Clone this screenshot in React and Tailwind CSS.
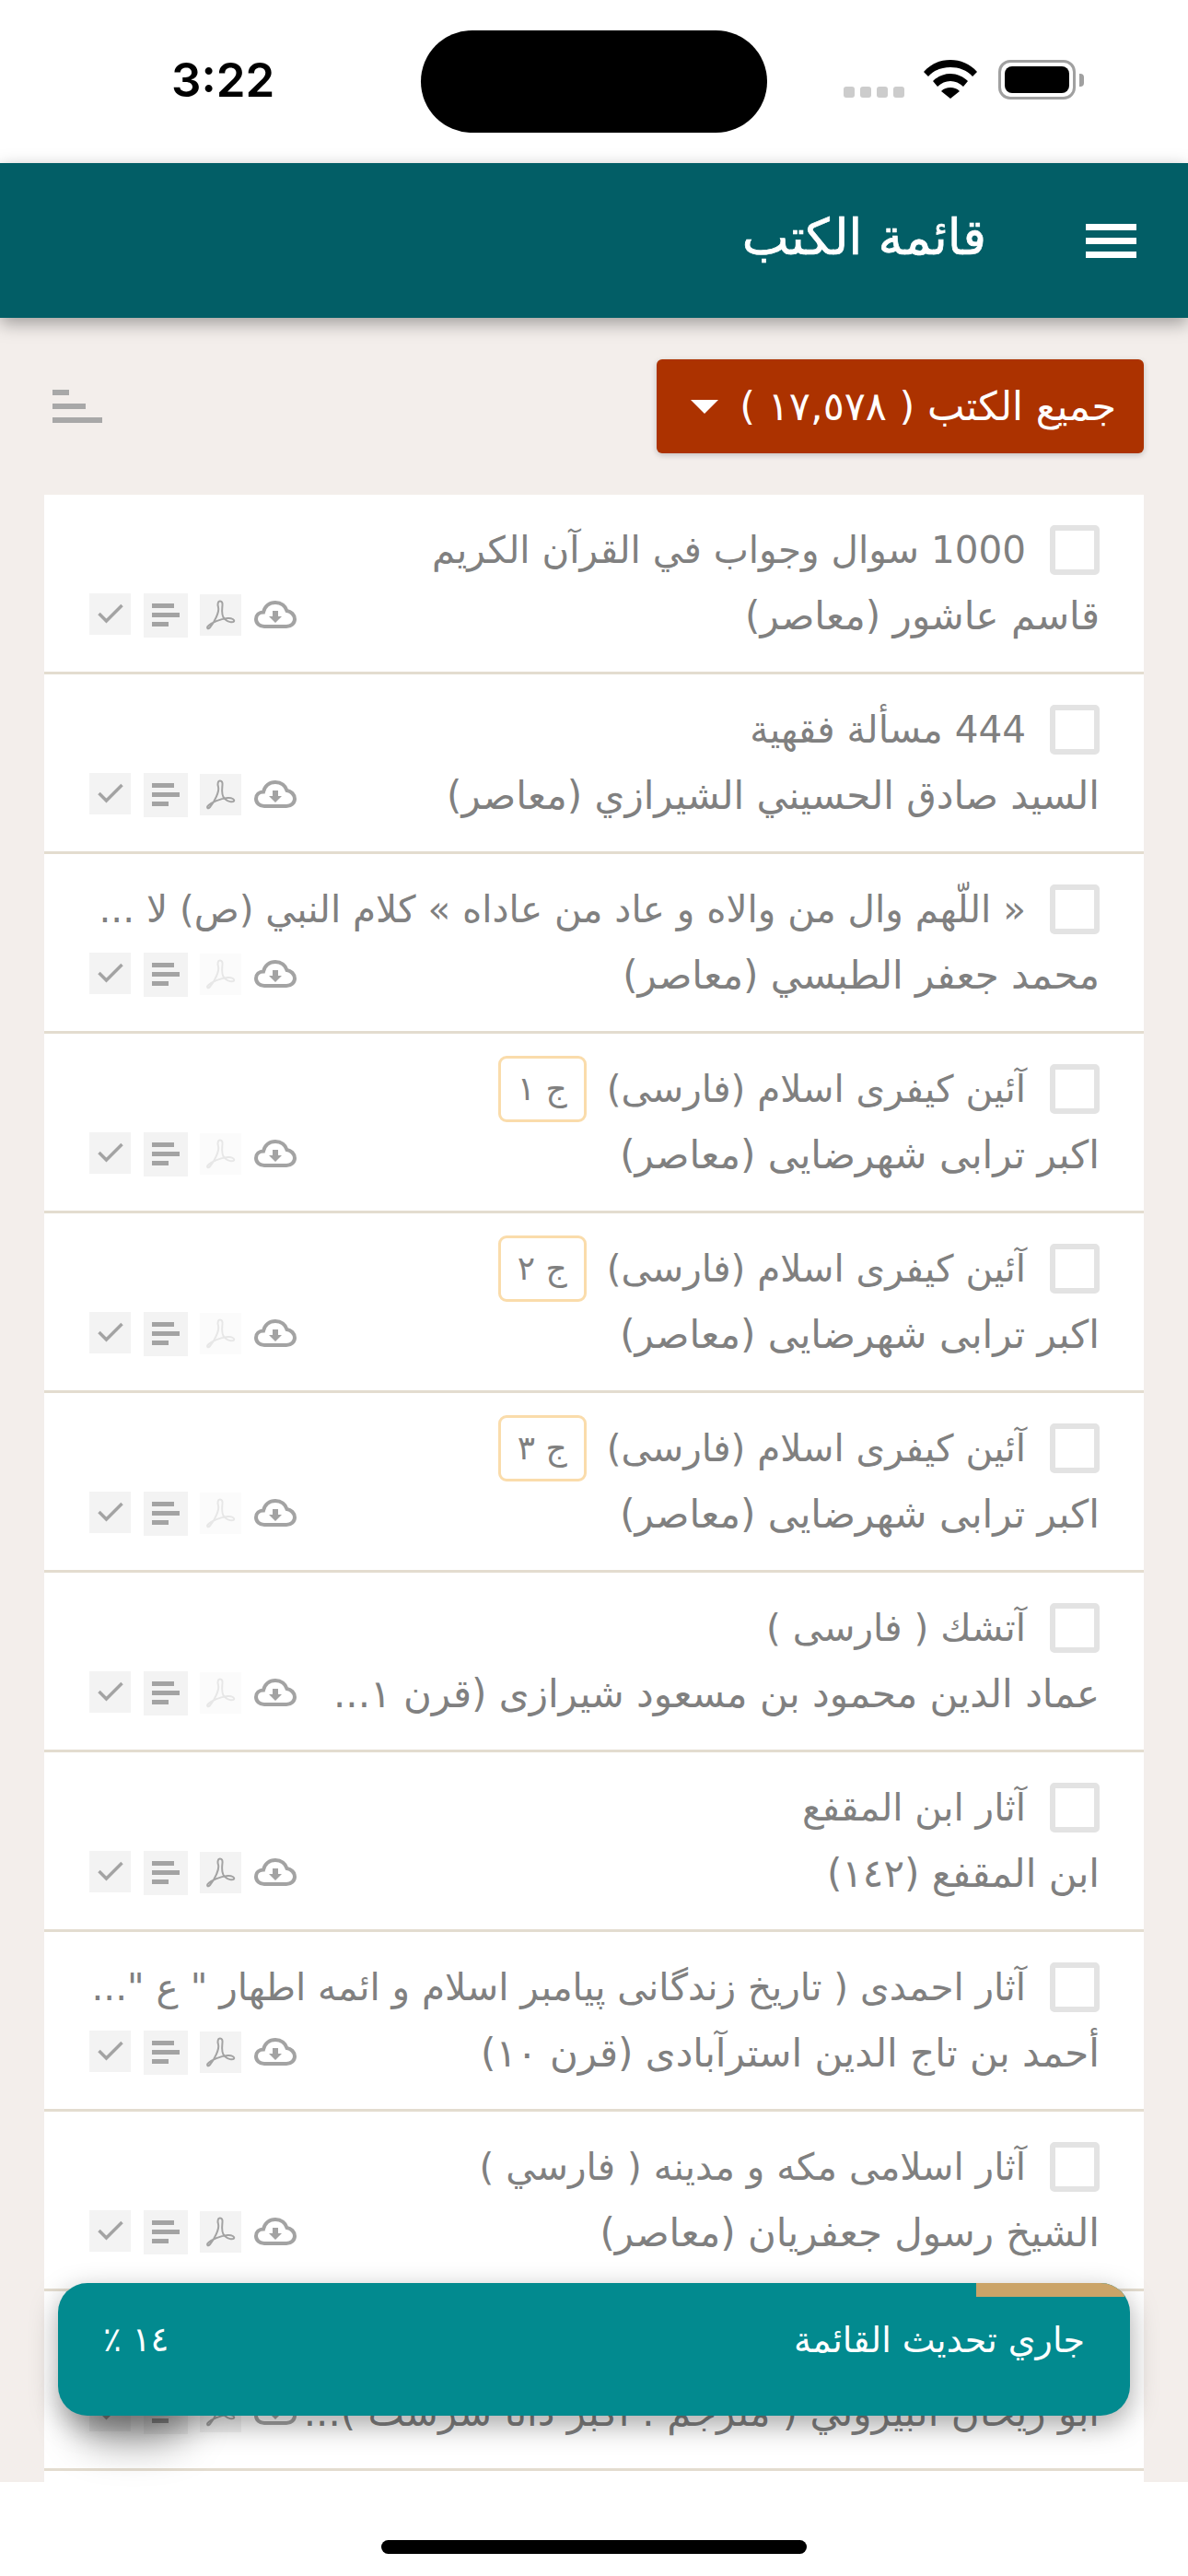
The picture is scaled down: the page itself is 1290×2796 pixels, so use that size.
const FONT = "font-['DejaVu_Sans',sans-serif]";

const rows = [
  { title: '1000 سوال وجواب في القرآن الكريم', author: 'قاسم عاشور (معاصر)', pdf: true },
  { title: '444 مسألة فقهية', author: 'السيد صادق الحسيني الشيرازي (معاصر)', pdf: true },
  { title: '« اللّهم وال من والاه و عاد من عاداه » كلام النبي (ص) لا ...', author: 'محمد جعفر الطبسي (معاصر)', pdf: false },
  { title: 'آئين كيفرى اسلام (فارسى)', chip: 'ج ١', author: 'اكبر ترابى شهرضايى (معاصر)', pdf: false },
  { title: 'آئين كيفرى اسلام (فارسى)', chip: 'ج ٢', author: 'اكبر ترابى شهرضايى (معاصر)', pdf: false },
  { title: 'آئين كيفرى اسلام (فارسى)', chip: 'ج ٣', author: 'اكبر ترابى شهرضايى (معاصر)', pdf: false },
  { title: 'آتشك ( فارسى )', author: 'عماد الدين محمود بن مسعود شيرازى (قرن ١...', pdf: false },
  { title: 'آثار ابن المقفع', author: 'ابن المقفع (١٤٢)', pdf: true },
  { title: 'آثار احمدى ( تاريخ زندگانى پيامبر اسلام و ائمه اطهار " ع "...', author: 'أحمد بن تاج الدين استرآبادى (قرن ١٠)', pdf: true },
  { title: 'آثار اسلامى مكه و مدينه ( فارسي )', author: 'الشيخ رسول جعفريان (معاصر)', pdf: true },
  // title of this one sits behind the toast
  { title: '', author: 'ابو ريحان البيروني ( مترجم : اكبر دانا سرشت )...', pdf: true },
  { title: '', author: '', pdf: true, empty: true },
];

function Tile({ className = '', children }) {
  return (
    <div className={`bg-[#f3f3f3] flex items-center justify-center ${className}`}>
      {children}
    </div>
  );
}

function Row({ row }) {
  if (row.empty) return <div className="h-[195px]" />;
  return (
    <div className="h-[195px] border-b-[3px] border-[#e3dccf] pt-[33px] pl-[49px] pr-[48px] text-[#808080]">
      <div className="flex items-center gap-[26px] h-[54px]">
        <div className="w-[54px] h-[54px] shrink-0 rounded-[5px] border-[6px] border-[#e3e3e3]" />
        <div className="min-w-0 text-[40.5px] leading-[54px] whitespace-nowrap">{row.title}</div>
        {row.chip && (
          <div className="w-[96px] h-[72px] shrink-0 -mr-[4px] rounded-[9px] border-[3px] border-[#fadcab] flex items-center justify-center text-[36px]">
            {row.chip}
          </div>
        )}
      </div>
      <div className="flex items-center justify-between mt-[18px] h-[54px]">
        <div className="text-[42px] leading-[54px] whitespace-nowrap">{row.author}</div>
        <div dir="ltr" className="flex items-start gap-[14px] shrink-0 -mt-[3px]">
          <Tile className="w-[45px] h-[45px]">
            <svg width="28" height="22" viewBox="0 0 28 22" fill="none" stroke="#a3a3a3" strokeWidth="3.500"><path d="M1.500 11l8 8L26.500 2" /></svg>
          </Tile>
          <Tile className="w-[48px] h-[48px] pl-[9px] !justify-start">
            <div className="flex flex-col gap-[5px] w-[30px]">
              <div className="h-[5px] w-[24px] bg-[#a3a3a3]" />
              <div className="h-[5px] w-[30px] bg-[#a3a3a3]" />
              <div className="h-[5px] w-[18px] bg-[#a3a3a3]" />
            </div>
          </Tile>
          <Tile className={`w-[45px] h-[45px] mt-[1px] -ml-[1px] ${row.pdf ? '' : 'opacity-25'}`}>
            <svg width="45" height="45" viewBox="0 0 45 45" fill="none" stroke="#a3a3a3" strokeWidth="2">
              <path d="M22 7.500C19.500 7.500 19 11 20 14C21.500 19 16 30 11 36C8.500 39 7 36 9.500 34C13 30.500 22 27 30 26C35 25.500 38 28 37 29.500C35.500 31 31 30.500 27 27C23 23.500 24 17 24.500 12C24.800 9.500 24 7.500 22 7.500Z" />
            </svg>
          </Tile>
          <svg className="mt-[8px]" width="46" height="30" viewBox="0 0 46 30" fill="none">
            <path d="M11 28C6 28 2 24.500 2 20S5.500 12.500 10 12.500C11.500 6 16.500 2 23 2S34 6 35.500 11C40 11.500 44 15.500 44 20S40 28 35 28Z" stroke="#a3a3a3" strokeWidth="4" />
            <path d="M20 11h6v6h4l-7 7-7-7h4z" fill="#a3a3a3" />
          </svg>
        </div>
      </div>
    </div>
  );
}

export default function App() {
  return (
    <div dir="rtl" className={`relative w-[1290px] h-[2796px] overflow-hidden bg-white ${FONT}`}>
      {/* status bar */}
      <div dir="ltr" className="h-[177px] flex items-start relative">
        <div className="ml-[186px] mt-[55px] text-black text-[51px] leading-[64px] font-semibold font-['Inter',sans-serif]">3:22</div>
        <div className="absolute left-[457px] top-[33px] w-[376px] h-[111px] rounded-[56px] bg-black" />
        <div className="absolute left-[916px] top-[94px] flex gap-[6px]">
          <div className="w-[12px] h-[12px] rounded-[3px] bg-[#cccccc]" />
          <div className="w-[12px] h-[12px] rounded-[3px] bg-[#cccccc]" />
          <div className="w-[12px] h-[12px] rounded-[3px] bg-[#cccccc]" />
          <div className="w-[12px] h-[12px] rounded-[3px] bg-[#cccccc]" />
        </div>
        <svg className="absolute left-[1003px] top-[65px]" width="58" height="42" viewBox="0 0 58 42">
          <path d="M29 0C18 0 8 4 0 13l5 5c6-7 15-10 24-10s18 3 24 10l5-5C50 4 40 0 29 0z" />
          <path d="M29 15c-7 0-14 3-19 8l5 6c4-4 9-6 14-6s10 2 14 6l5-6c-5-5-12-8-19-8z" />
          <path d="M29 30c-4 0-7 1-10 4l10 8 10-8c-3-3-6-4-10-4z" />
        </svg>
        <div className="absolute left-[1084px] top-[65px] w-[84px] h-[43px] rounded-[13px] border-[3px] border-[#a0a0a0] p-[4px]">
          <div className="w-full h-full rounded-[8px] bg-black" />
        </div>
        <div className="absolute left-[1172px] top-[80px] w-[5px] h-[14px] rounded-r-[4px] bg-[#a0a0a0]" />
      </div>

      {/* header */}
      <div className="relative z-10 h-[168px] bg-[#025e66] shadow-[0_6px_18px_rgba(0,0,0,0.35)] flex items-center pr-[56px] text-white">
        <div className="flex flex-col gap-[8px] w-[55px]">
          <div className="h-[7px] bg-white" />
          <div className="h-[7px] bg-white" />
          <div className="h-[7px] bg-white" />
        </div>
        <div className="mr-[108px] text-[54px] leading-[60px] -mt-[6px] [-webkit-text-stroke:0.7px_white]">قائمة الكتب</div>
      </div>

      {/* filter row and list */}
      <div className="bg-[#f3eeeb] h-[2349px] px-[48px] overflow-hidden">
        <div className="flex items-center justify-between h-[192px] pt-[45px] pb-[45px]">
          <div className="w-[529px] h-[102px] rounded-[6px] bg-[#ac3200] shadow-[0_2px_6px_rgba(0,0,0,0.2)] flex items-center justify-between pr-[30px] pl-[37px] text-white text-[43px] whitespace-nowrap">
            <span>جميع الكتب ( ١٧,٥٧٨ )</span>
            <span className="w-0 h-0 border-x-[15px] border-x-transparent border-t-[15px] border-t-white" />
          </div>
          <div dir="ltr" className="flex flex-col gap-[9px] items-start ml-[9px]">
            <div className="h-[6px] w-[18px] bg-[#a8a8a8]" />
            <div className="h-[6px] w-[36px] bg-[#a8a8a8]" />
            <div className="h-[6px] w-[54px] bg-[#a8a8a8]" />
          </div>
        </div>

        <div className="bg-white">
          {rows.map((r, i) => <Row key={i} row={r} />)}
        </div>
      </div>

      {/* shadow blob under the toast */}
      <div className="absolute left-[85px] top-[2585px] w-[120px] h-[65px] rounded-full bg-black/40 blur-[22px]" />

      {/* progress toast */}
      <div className="absolute left-[63px] top-[2478px] w-[1164px] h-[144px] rounded-[32px] bg-[#028a8f] shadow-[0_10px_30px_rgba(0,0,0,0.35)] overflow-hidden text-white">
        <div className="absolute right-[6px] top-0 w-[161px] h-[15px] bg-[#cba468] rounded-tr-[16px]" />
        <div className="flex items-center justify-between pt-[38px] px-[49px] text-[38px] leading-[48px]">
          <span>جاري تحديث القائمة</span>
          <span className="text-[37px]">١٤ ٪</span>
        </div>
      </div>

      {/* home indicator */}
      <div className="absolute left-[414px] top-[2757px] w-[462px] h-[15px] rounded-full bg-black" />
    </div>
  );
}
